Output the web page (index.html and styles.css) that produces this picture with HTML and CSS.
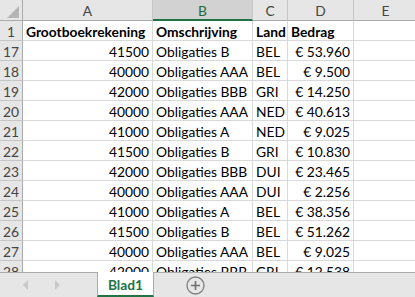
FILE: index.html
```html
<!DOCTYPE html>
<html lang="nl">
<head>
<meta charset="utf-8">
<link rel="stylesheet" href="styles.css">
</head>
<body>
<div class="app">
  <div class="sheet">
    <div class="grid">
      <div class="ch corner"><svg class="tri" width="12" height="12" viewBox="0 0 12 12"><polygon points="12,0 12,12 0,12" fill="#b5b5b5"/></svg></div>
      <div class="ch">A</div>
      <div class="ch sel">B</div>
      <div class="ch">C</div>
      <div class="ch">D</div>
      <div class="ch">E</div>

      <div class="rh">1</div>
      <div class="c b">Grootboekrekening</div>
      <div class="c b">Omschrijving</div>
      <div class="c b">Land</div>
      <div class="c b">Bedrag</div>
      <div class="c"></div>

      <div class="rh">17</div><div class="c r">41500</div><div class="c">Obligaties B</div><div class="c">BEL</div><div class="c r">€&nbsp;53.960</div><div class="c"></div>
      <div class="rh">18</div><div class="c r">40000</div><div class="c">Obligaties AAA</div><div class="c">BEL</div><div class="c r">€&nbsp;9.500</div><div class="c"></div>
      <div class="rh">19</div><div class="c r">42000</div><div class="c">Obligaties BBB</div><div class="c">GRI</div><div class="c r">€&nbsp;14.250</div><div class="c"></div>
      <div class="rh">20</div><div class="c r">40000</div><div class="c">Obligaties AAA</div><div class="c">NED</div><div class="c r">€&nbsp;40.613</div><div class="c"></div>
      <div class="rh">21</div><div class="c r">41000</div><div class="c">Obligaties A</div><div class="c">NED</div><div class="c r">€&nbsp;9.025</div><div class="c"></div>
      <div class="rh">22</div><div class="c r">41500</div><div class="c">Obligaties B</div><div class="c">GRI</div><div class="c r">€&nbsp;10.830</div><div class="c"></div>
      <div class="rh">23</div><div class="c r">42000</div><div class="c">Obligaties BBB</div><div class="c">DUI</div><div class="c r">€&nbsp;23.465</div><div class="c"></div>
      <div class="rh">24</div><div class="c r">40000</div><div class="c">Obligaties AAA</div><div class="c">DUI</div><div class="c r">€&nbsp;2.256</div><div class="c"></div>
      <div class="rh">25</div><div class="c r">41000</div><div class="c">Obligaties A</div><div class="c">BEL</div><div class="c r">€&nbsp;38.356</div><div class="c"></div>
      <div class="rh">26</div><div class="c r">41500</div><div class="c">Obligaties B</div><div class="c">BEL</div><div class="c r">€&nbsp;51.262</div><div class="c"></div>
      <div class="rh">27</div><div class="c r">40000</div><div class="c">Obligaties AAA</div><div class="c">BEL</div><div class="c r">€&nbsp;9.025</div><div class="c"></div>
      <div class="rh">28</div><div class="c r">42000</div><div class="c">Obligaties BBB</div><div class="c">GRI</div><div class="c r">€&nbsp;12.538</div><div class="c"></div>
    </div>
  </div>
  <div class="tabbar">
    <div class="nav">
      <svg width="6" height="10" viewBox="0 0 6 10"><polygon points="5,0 5,10 0,5" fill="#c8c8c8"/></svg>
      <svg width="6" height="10" viewBox="0 0 6 10"><polygon points="1,0 1,10 6,5" fill="#c8c8c8"/></svg>
    </div>
    <div class="tab">Blad1</div>
    <div class="add">
      <svg width="19" height="19" viewBox="0 0 19 19"><circle cx="9.5" cy="9.5" r="8.5" fill="none" stroke="#7f7f7f" stroke-width="1.3"/><path d="M9.5 5v9M5 9.5h9" stroke="#6f6f6f" stroke-width="1.6"/></svg>
    </div>
  </div>
</div>
</body>
</html>
```
FILE: styles.css
```css
* { box-sizing: border-box; }
html, body { margin: 0; padding: 0; }
body {
  width: 415px;
  height: 297px;
  overflow: hidden;
  background: #fff;
  font-family: Lato, "Liberation Sans", Arial, sans-serif;
  font-size: 13.8px;
  color: #000;
}
.app {
  display: flex;
  flex-direction: column;
  height: 297px;
}
.sheet {
  height: 272px;
  overflow: hidden;
  flex: none;
}
.grid {
  display: grid;
  grid-template-columns: 23px 130px 100px 35px 66px 64px;
  grid-template-rows: 21px;
  grid-auto-rows: 20px;
  width: 418px;
}
.ch {
  background: #e6e6e6;
  border-right: 1px solid #c6c6c6;
  border-bottom: 1px solid #ababab;
  color: #444;
  display: flex;
  align-items: center;
  justify-content: center;
  padding-top: 1px;
}
.ch.corner {
  justify-content: flex-end;
  align-items: flex-end;
  padding: 0 3px 2px 0;
  border-right-color: #ababab;
}
.ch.sel {
  background: #d2d2d2;
  color: #1d6b3f;
  border-bottom: 2px solid #217346;
}
.rh {
  background: #e6e6e6;
  border-right: 1px solid #ababab;
  border-bottom: 1px solid #c6c6c6;
  color: #444;
  display: flex;
  align-items: center;
  justify-content: center;
  padding-top: 1px;
}
.c {
  border-right: 1px solid #d9d9d9;
  border-bottom: 1px solid #d9d9d9;
  padding: 1px 3px 0 3px;
  display: flex;
  align-items: center;
  white-space: nowrap;
  overflow: hidden;
}
.c.r { justify-content: flex-end; }
.c.b { font-weight: bold; }
.tabbar {
  flex: 1;
  background: #e6e6e6;
  border-top: 1px solid #ababab;
  display: flex;
  align-items: stretch;
}
.nav {
  width: 97px;
  display: flex;
  align-items: center;
  padding-left: 23px;
  gap: 25px;
}
.tab {
  width: 57px;
  margin-top: -1px;
  background: #fff;
  border-left: 1px solid #ababab;
  border-right: 1px solid #ababab;
  border-bottom: 2px solid #217346;
  color: #217346;
  font-weight: bold;
  display: flex;
  align-items: center;
  justify-content: center;
  padding-top: 1px;
}
.add {
  display: flex;
  align-items: center;
  padding-left: 32px;
  padding-top: 1px;
}
```
